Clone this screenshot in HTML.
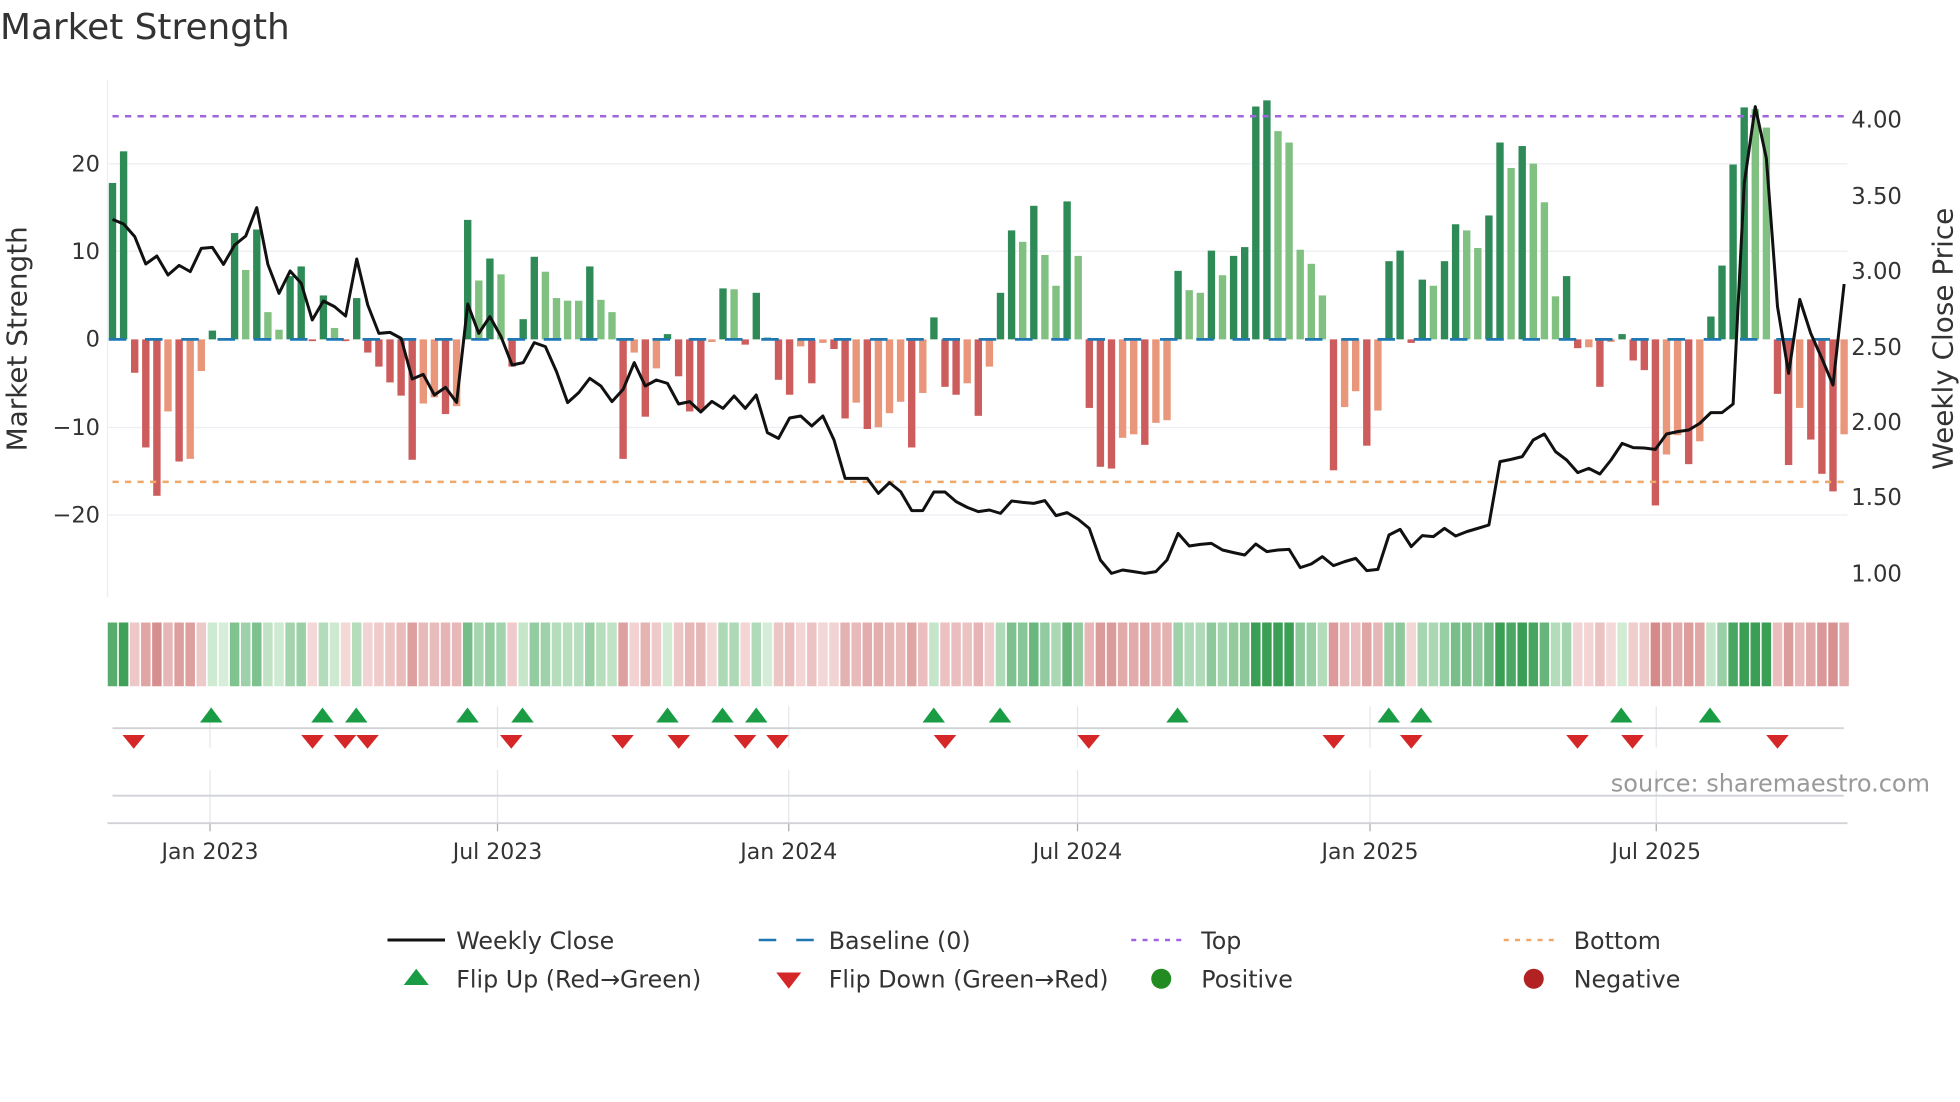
<!DOCTYPE html>
<html><head><meta charset="utf-8"><style>
html,body{margin:0;padding:0;background:#fff;}
svg{display:block;font-family:"DejaVu Sans","Liberation Sans",sans-serif;}
</style></head><body>
<svg id="s" width="1960" height="1102" viewBox="0 0 1568 881.6" xmlns="http://www.w3.org/2000/svg">
<rect width="1568" height="882" fill="#fff"/>
<text x="0" y="31" font-size="28.7" fill="#333">Market Strength</text>
<g id="grid" stroke="#eceef2" stroke-width="1">
<line x1="86" x2="1478" y1="131" y2="131"/><line x1="86" x2="1478" y1="201" y2="201"/>
<line x1="86" x2="1478" y1="342" y2="342"/><line x1="86" x2="1478" y1="412" y2="412"/>
<line x1="86" x2="86" y1="64" y2="478"/>
</g>
<g id="bars"></g>
<line x1="87" x2="1478" y1="271.5" y2="271.5" stroke="#1f77b4" stroke-width="2.2" stroke-dasharray="14,15"/>
<line x1="90" x2="1478" y1="93" y2="93" stroke="#a066e0" stroke-width="2" stroke-dasharray="5,5"/>
<line x1="90" x2="1478" y1="385.5" y2="385.5" stroke="#f0a868" stroke-width="2" stroke-dasharray="5,5"/>
<polyline id="pl" fill="none" stroke="#111" stroke-width="2.4" stroke-linejoin="round"/>
<g font-size="18" fill="#333" text-anchor="end">
<text x="80" y="137">20</text><text x="80" y="207">10</text><text x="80" y="277">0</text>
<text x="80" y="348">−10</text><text x="80" y="418">−20</text>
</g>
<g font-size="18.2" fill="#333">
<text x="1481" y="102">4.00</text><text x="1481" y="163">3.50</text><text x="1481" y="223">3.00</text>
<text x="1481" y="284">2.50</text><text x="1481" y="344">2.00</text><text x="1481" y="404">1.50</text><text x="1481" y="465">1.00</text>
</g>
<text transform="translate(21,271) rotate(-90)" font-size="22.3" fill="#333" text-anchor="middle">Market Strength</text>
<text transform="translate(1562,271) rotate(-90)" font-size="22.3" fill="#333" text-anchor="middle">Weekly Close Price</text>
<g id="strip"></g>
<g stroke="#e4e6ea" stroke-width="1" id="vg"></g>
<line x1="90" x2="1475" y1="582.5" y2="582.5" stroke="#d0d2d6" stroke-width="1.5"/>
<line x1="90" x2="1475" y1="636.5" y2="636.5" stroke="#d0d2d6" stroke-width="1.5"/>
<line x1="86" x2="1478" y1="658.5" y2="658.5" stroke="#d0d2d6" stroke-width="1.5"/>
<g id="mk"></g>
<text x="1544" y="633" font-size="19.2" fill="#999" text-anchor="end">source: sharemaestro.com</text>
<g font-size="17.6" fill="#333" text-anchor="middle">
<text x="168" y="687">Jan 2023</text><text x="398" y="687">Jul 2023</text><text x="631" y="687">Jan 2024</text>
<text x="862" y="687">Jul 2024</text><text x="1096" y="687">Jan 2025</text><text x="1325" y="687">Jul 2025</text>
</g>
<g font-size="19" fill="#333">
<line x1="310" x2="356" y1="752" y2="752" stroke="#111" stroke-width="2.4"/>
<text x="365" y="759">Weekly Close</text>
<line x1="607" x2="651" y1="752" y2="752" stroke="#1f77b4" stroke-width="2" stroke-dasharray="14,16"/>
<text x="663" y="759">Baseline (0)</text>
<line x1="905" x2="949" y1="752" y2="752" stroke="#a066e0" stroke-width="2" stroke-dasharray="4,5"/>
<text x="961" y="759">Top</text>
<line x1="1203" x2="1247" y1="752" y2="752" stroke="#f0a868" stroke-width="2" stroke-dasharray="4,5"/>
<text x="1259" y="759">Bottom</text>
<polygon points="323,788 343,788 333,775" fill="#1a9c45"/>
<text x="365" y="790">Flip Up (Red→Green)</text>
<polygon points="621,778 641,778 631,791" fill="#d62728"/>
<text x="663" y="790">Flip Down (Green→Red)</text>
<circle cx="929" cy="783" r="8" fill="#228b22"/>
<text x="961" y="790">Positive</text>
<circle cx="1227" cy="783" r="8" fill="#b22222"/>
<text x="1259" y="790">Negative</text>
</g>
</svg>
<script>
var NS="http://www.w3.org/2000/svg";
function el(t,a,p){var e=document.createElementNS(NS,t);for(var k in a)e.setAttribute(k,a[k]);p.appendChild(e);return e;}
var B=[[17.8,'D'],[21.4,'D'],[-3.8,'R'],[-12.3,'R'],[-17.8,'R'],[-8.2,'O'],[-13.9,'R'],[-13.6,'O'],[-3.6,'O'],[1,'D'],
[0,'D'],[12.1,'D'],[7.9,'L'],[12.5,'D'],[3.1,'L'],[1.1,'L'],[7.2,'D'],[8.3,'D'],[-0.2,'R'],[5,'D'],
[1.3,'L'],[-0.2,'R'],[4.7,'D'],[-1.5,'R'],[-3.1,'R'],[-4.9,'R'],[-6.4,'R'],[-13.7,'R'],[-7.3,'O'],[-6.6,'O'],
[-8.5,'R'],[-7.6,'O'],[13.6,'D'],[6.7,'L'],[9.2,'D'],[7.4,'L'],[-3.1,'R'],[2.3,'D'],[9.4,'D'],[7.7,'L'],
[4.7,'L'],[4.4,'L'],[4.4,'L'],[8.3,'D'],[4.5,'L'],[3.1,'L'],[-13.6,'R'],[-1.5,'O'],[-8.8,'R'],[-3.3,'O'],
[0.6,'D'],[-4.2,'R'],[-8.2,'R'],[-8,'R'],[-0.3,'O'],[5.8,'D'],[5.7,'L'],[-0.6,'R'],[5.3,'D'],[0.2,'D'],
[-4.6,'R'],[-6.3,'R'],[-0.8,'O'],[-5,'R'],[-0.4,'O'],[-1.1,'R'],[-9,'R'],[-7.2,'O'],[-10.2,'R'],[-10,'O'],
[-8.4,'O'],[-7.1,'O'],[-12.3,'R'],[-6.1,'O'],[2.5,'D'],[-5.4,'R'],[-6.3,'R'],[-5,'O'],[-8.7,'R'],[-3.1,'O'],
[5.3,'D'],[12.4,'D'],[11.1,'L'],[15.2,'D'],[9.6,'L'],[6.1,'L'],[15.7,'D'],[9.5,'L'],[-7.8,'R'],[-14.5,'R'],
[-14.7,'R'],[-11.2,'O'],[-10.8,'O'],[-12,'R'],[-9.5,'O'],[-9.2,'O'],[7.8,'D'],[5.6,'L'],[5.3,'L'],[10.1,'D'],
[7.3,'L'],[9.5,'D'],[10.5,'D'],[26.5,'D'],[27.2,'D'],[23.7,'L'],[22.4,'L'],[10.2,'L'],[8.6,'L'],[5,'L'],
[-14.9,'R'],[-7.7,'O'],[-5.9,'O'],[-12.1,'R'],[-8.1,'O'],[8.9,'D'],[10.1,'D'],[-0.4,'R'],[6.8,'D'],[6.1,'L'],
[8.9,'D'],[13.1,'D'],[12.4,'L'],[10.4,'L'],[14.1,'D'],[22.4,'D'],[19.5,'L'],[22,'D'],[20,'L'],[15.6,'L'],
[4.9,'L'],[7.2,'D'],[-1,'R'],[-0.9,'O'],[-5.4,'R'],[-0.3,'O'],[0.6,'D'],[-2.4,'R'],[-3.5,'R'],[-18.9,'R'],
[-13.1,'O'],[-10.9,'O'],[-14.2,'R'],[-11.6,'O'],[2.6,'D'],[8.4,'D'],[19.9,'D'],[26.4,'D'],[26.2,'L'],[24.1,'L'],
[-6.2,'R'],[-14.3,'R'],[-7.8,'O'],[-11.4,'R'],[-15.3,'R'],[-17.3,'R'],[-10.8,'O']];
var C={D:'#2e8b57',L:'#80c080',R:'#cd5c5c',O:'#e9967a'};
var Z=[418,432,470,552,528,585,556,575,505,502,553,495,468,383,553,640,573,610,720,663,680,708,537,675,760,757,775,897,883,945,922,967,672,760,710,770,855,848,788,800,875,968,938,895,918,
965,928,848,918,900,910,972,965,996,964,985,948,985,945,1058,1075,1014,1008,1038,1008,1080,1195,1195,1195,1240,1208,1235,1292,1292,1236,1236,1265,1282,1295,1290,1300,1263,1267,1270,1262,1307,1298,1318,
1345,1440,1480,1470,1475,1480,1475,1440,1360,1398,1393,1390,1410,1418,1425,1392,1415,1410,1408,1463,1452,1430,1457,1445,1435,1472,1468,1365,1348,1400,1367,1370,1345,1368,1355,1345,1335,1145,1138,1130,1080,1062,1115,
1140,1178,1165,1182,1140,1090,1103,1104,1108,1062,1055,1050,1030,998,998,972,310,80,235,680,880,658,760,835,915,612];
var bg=document.getElementById('bars'),st=document.getElementById('strip'),pts=[];
function mix(a,b,t){var r='#';for(var i=0;i<3;i++){var x=parseInt(a.substr(1+2*i,2),16),y=parseInt(b.substr(1+2*i,2),16);var v=Math.round(x+(y-x)*t).toString(16);r+=(v.length<2?'0':'')+v;}return r;}
for(var i=0;i<B.length;i++){
 var x=90+8.88*i,v=B[i][0],y0=271.5,h=v*7.03;
 if(v!=0) el('rect',{x:x-2.95,y:Math.min(y0,y0-h),width:5.9,height:Math.abs(h),fill:C[B[i][1]]},bg);
 var t=Math.min(1,Math.abs(v)/22),c;
 if(v>=0) c=mix('#d6eed8','#3a9e55',t); else c=mix('#f4d8d8','#d07c7c',t);
 el('rect',{x:x-3.8,y:498,width:7.6,height:51,fill:c},st);
 pts.push(x.toFixed(1)+','+(64+Z[i]/3.75).toFixed(1));
}
document.getElementById('pl').setAttribute('points',pts.join(' '));
var vg=document.getElementById('vg');
[168,398,631,862,1096,1325].forEach(function(x){el('line',{x1:x,x2:x,y1:565,y2:598},vg);el('line',{x1:x,x2:x,y1:616,y2:658},vg);el('line',{x1:x,x2:x,y1:658,y2:665,stroke:'#aaa'},vg);});
var mk=document.getElementById('mk');
[169,258,285,374,418,534,578,605,747,800,942,1111,1137,1297,1368].forEach(function(x){el('polygon',{points:(x-9)+',578 '+(x+9)+',578 '+x+',566',fill:'#1a9c45'},mk);});
[107,250,276,294,409,498,543,596,622,756,871,1067,1129,1262,1306,1422].forEach(function(x){el('polygon',{points:(x-9)+',588 '+(x+9)+',588 '+x+',599',fill:'#d62728'},mk);});
</script>
</body></html>
